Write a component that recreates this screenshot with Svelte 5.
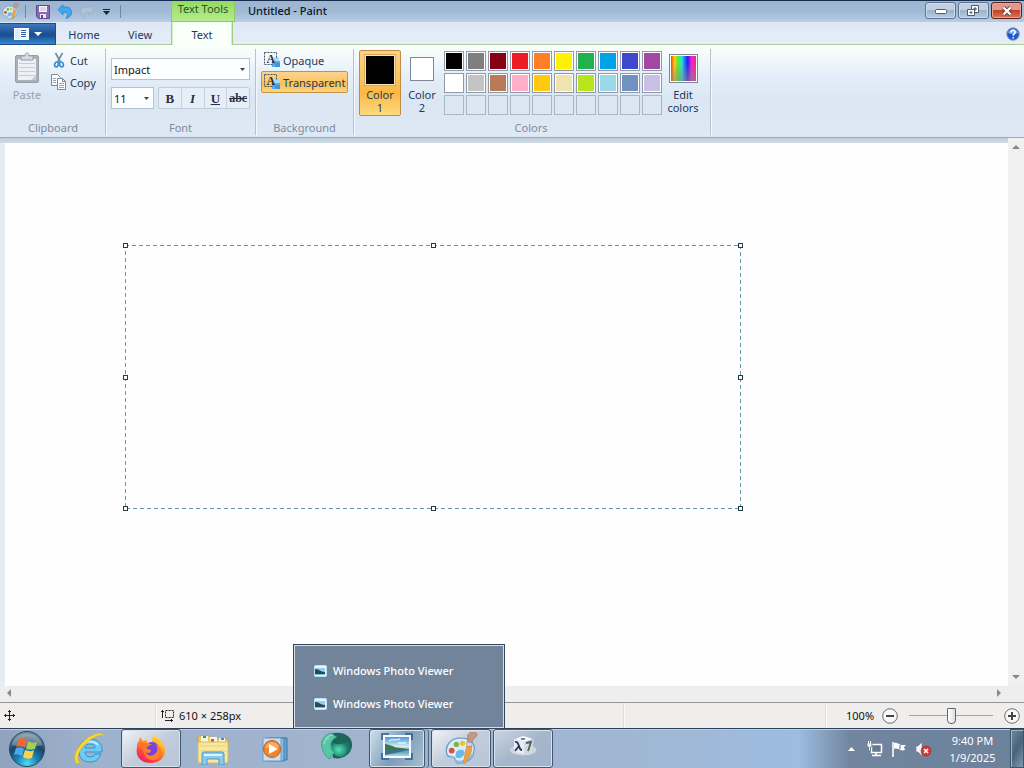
<script>
  let bg = $state('transparent');
  let active = $state(1);
  let color1 = $state('#000000');
  let color2 = $state('#ffffff');
  let zoom = $state(50);
  const palette = [
    '#000000', '#7f7f7f', '#880015', '#ed1c24', '#ff7f27', '#fff200', '#22b14c', '#00a2e8', '#3f48cc', '#a349a4',
    '#ffffff', '#c3c3c3', '#b97a57', '#ffaec9', '#ffc90e', '#efe4b0', '#b5e61d', '#99d9ea', '#7092be', '#c8bfe7'
  ];
  const empties = Array.from({ length: 10 });
  const handles = ['nw', 'n', 'ne', 'w', 'e', 'sw', 's', 'se'];
  function pick(c) {
    if (active === 1) color1 = c;
    else color2 = c;
  }
</script>

{#snippet arrow()}
  <svg class="arrow" width="5" height="3" viewBox="0 0 5 3" aria-hidden="true"><path d="M0 0h5L2.500 3z" fill="#3c4653" /></svg>
{/snippet}

{#snippet paintIcon(size)}
  <svg width={size} height={size} viewBox="0 0 32 32" aria-hidden="true">
    <path d="M2 22C-1 12 7 5 16 6c9 0 14 6 12 13-1 8-9 12-16 11-3-1-1-3-3-5s-6 0-7-3z" fill="#d8eefa" stroke="#6fa0c4" stroke-width="1.300" />
    <path d="M9 27c5 4 14 1 18-6" fill="none" stroke="#8bc0e0" stroke-width="2" />
    <circle cx="6.500" cy="18" r="2.800" fill="#d95240" />
    <circle cx="11" cy="12" r="2.600" fill="#7db548" />
    <circle cx="17" cy="11" r="2.600" fill="#e8c33b" />
    <path d="M11 19c3-3 8-2 8 1 0 4-6 7-9 4z" fill="#6eb9ea" />
    <path d="M22 3c2-4 10-4 9 0-1 3-4 3-5 7h-4z" fill="#c59a80" stroke="#9a7058" stroke-width=".6" />
    <path d="M21 10h5v4h-5z" fill="#cfd6dc" stroke="#8d969c" stroke-width=".6" />
    <path d="M21 14h5c0 6-2 10-7 17-2-3 0-5 0-8z" fill="#f0a04a" stroke="#cf8430" stroke-width=".6" />
  </svg>
{/snippet}

{#snippet bgIcon()}
  <svg width="17" height="16" viewBox="0 0 17 16" aria-hidden="true">
    <path d="M10 5h5v6h-5z" fill="#a8d8f6" /><path d="M8 9h8v6H8z" fill="#58aeea" /><path d="M11 11h5v4h-5z" fill="#3a97dd" />
    <path d="M.5.500h12v5M.5.500v12h8" fill="none" stroke="#3f566b" stroke-dasharray="2 1" />
    <text x="2.500" y="11" font-family="Liberation Serif, serif" font-weight="bold" font-size="12" fill="#22344a">A</text>
  </svg>
{/snippet}

{#snippet photoIcon()}
  <svg width="13" height="12" viewBox="0 0 13 12" aria-hidden="true">
    <rect x=".5" y=".5" width="12" height="11" rx="1" fill="#e5f4fb" stroke="#b9dff0" />
    <path d="M1 3h10v6H1z" fill="#9bcde6" /><path d="M1 4c5 0 5 3 10 3v3H1z" fill="#244a57" /><path d="M1 9h10v1H1z" fill="#75bfdc" />
  </svg>
{/snippet}

<div class="desktop">
  <header class="title">
    <div class="quick">
      <span class="app">{@render paintIcon(17)}</span>
      <i class="rule"></i>
      <button class="q" aria-label="Save">
        <svg width="14" height="14" viewBox="0 0 14 14"><path d="M.5.5h13v13h-11l-2-2z" fill="#8869b4" stroke="#63488f" /><path d="M3 1h8v6H3z" fill="#f6f3fa" /><path d="M4 3h6M4 5h6" stroke="#c9b9dc" /><path d="M4 9h6v4H4z" fill="#eee8f5" /><path d="M5 10h2v3H5z" fill="#64478f" /></svg>
      </button>
      <button class="q" aria-label="Undo">
        <svg width="16" height="15" viewBox="0 0 16 15"><path d="M1 5.500L6 .8v2.700c5-1.500 8.500.5 8.500 5 0 3-2 5-5.500 6 2.500-4 2-7-3-6v2.500z" fill="#3fa9ee" stroke="#2a83c6" stroke-width=".8" /></svg>
      </button>
      <button class="q" aria-label="Redo">
        <svg width="16" height="15" viewBox="0 0 16 15"><path d="M15 5.500L10 .8v2.700C5 2 1.500 4 1.500 8.500c0 3 2 5 5.500 6-2.500-4-2-7 3-6v2.500z" fill="#b1c1d5" stroke="#9bafc6" stroke-width=".8" /></svg>
      </button>
      <button class="q more" aria-label="Customize Quick Access Toolbar">
        <svg width="7" height="6" viewBox="0 0 7 6"><path d="M0 0h7v1H0zM0 2h7L3.500 6z" fill="#1b2536" /></svg>
      </button>
      <i class="rule"></i>
    </div>
    <div class="tooltab">Text Tools</div>
    <h1>Untitled - Paint</h1>
    <div class="winbtns">
      <button aria-label="Minimize"><svg width="12" height="6" viewBox="0 0 12 6"><rect x=".5" y="1.500" width="11" height="4" rx="1" fill="#fff" stroke="#4b5c72" /></svg></button>
      <button aria-label="Restore"><svg width="13" height="12" viewBox="0 0 13 12"><path d="M4.500.5h7v7h-7z" fill="#fff" stroke="#4b5c72" /><path d="M7 3h2v2H7z" fill="#9fb6d0" stroke="#4b5c72" /><path d="M.5 4.500h7v6h-7z" fill="#fff" stroke="#4b5c72" /><path d="M3 7h2v1H3z" fill="#9fb6d0" stroke="#4b5c72" /></svg></button>
      <button class="close" aria-label="Close"><svg width="12" height="10" viewBox="0 0 12 10"><path d="M2.500 1.500l7 7M9.500 1.500l-7 7" stroke="#5c3b3b" stroke-width="4" /><path d="M2.500 1.500l7 7M9.500 1.500l-7 7" stroke="#fff" stroke-width="2.400" /></svg></button>
    </div>
  </header>

  <nav class="tabs">
    <button class="file" aria-label="Paint menu">
      <svg width="15" height="12" viewBox="0 0 15 12"><path d="M0 0h15v12H0z" fill="#f6faff" /><path d="M1 1h5v10H1z" fill="#dde9f7" /><path d="M7 2.500h5M7 4.500h5M7 6.500h5M7 8.500h5" stroke="#2c5d9c" /></svg>
      <svg width="8" height="4" viewBox="0 0 8 4"><path d="M0 0h8L4 4z" fill="#fff" /></svg>
    </button>
    <button class="tab">Home</button>
    <button class="tab">View</button>
    <button class="tab on">Text</button>
    <button class="help" aria-label="Help">
      <svg width="14" height="14" viewBox="0 0 14 14"><circle cx="7" cy="7" r="6.300" fill="#1f56c8" stroke="#8fa9cf" /><path d="M2 6a5.200 5.200 0 0 1 10 0c-3 1.500-7 1.500-10 0z" fill="#78a4ec" /><path d="M5 5.500C5 2.700 9.200 2.700 9.200 5.200 9.200 7 7.200 6.800 7.200 8.800M7.200 10v1.500" fill="none" stroke="#fff" stroke-width="1.500" /></svg>
    </button>
  </nav>

  <section class="ribbon">
    <div class="group clip">
      <div class="body">
        <button class="paste" disabled>
          <svg width="26" height="32" viewBox="0 0 26 32"><rect x="1.500" y="3.500" width="23" height="27" rx="1.500" fill="#a9b0ba" stroke="#969ea8" /><path d="M4 7h18v21H4z" fill="#edf1f6" /><path d="M5 11.500h16M5 15.500h16M5 19.500h16M5 23.500h16" stroke="#c7ced7" /><path d="M17 28l5-5v5z" fill="#c4cbd4" /><path d="M7 4h4c0-4 4-4 4 0h4v4H7z" fill="#d7dce2" stroke="#969ea8" /></svg>
          Paste
        </button>
        <div class="stack">
          <button class="small">
            <svg width="16" height="16" viewBox="0 0 16 16"><path d="M4.500 1l5 9M11.500 1l-5 9" stroke="#6e8fb0" stroke-width="1.700" /><g fill="none" stroke="#3689c9" stroke-width="1.600"><ellipse cx="5.500" cy="12.500" rx="1.800" ry="2.500" transform="rotate(20 5.500 12.500)" /><ellipse cx="10.500" cy="12.500" rx="1.800" ry="2.500" transform="rotate(-20 10.500 12.500)" /></g></svg>
            Cut
          </button>
          <button class="small">
            <svg width="16" height="16" viewBox="0 0 16 16"><g fill="#fafcff" stroke="#7a8798"><path d="M.5.5h6l3 3v8h-9z" /><path d="M6.500 4.500h5l3 3v8h-8z" /></g><path d="M2 4.500h3M2 6.500h3M2 8.500h3M8 9.500h5M8 11.500h5M8 13.500h5" stroke="#8fa6c2" /><path d="M11.500 4.500v3h3" fill="none" stroke="#7a8798" /></svg>
            Copy
          </button>
        </div>
      </div>
      <h2>Clipboard</h2>
    </div>

    <div class="group font">
      <div class="body col">
        <label class="combo"><select aria-label="Font family"><option>Impact</option><option>Arial</option></select>{@render arrow()}</label>
        <div class="line">
          <label class="combo size"><select aria-label="Font size"><option>11</option><option>12</option></select>{@render arrow()}</label>
          <div class="styles">
            <button aria-label="Bold"><b>B</b></button>
            <button aria-label="Italic"><em>I</em></button>
            <button aria-label="Underline"><u>U</u></button>
            <button aria-label="Strikethrough"><s>abc</s></button>
          </div>
        </div>
      </div>
      <h2>Font</h2>
    </div>

    <div class="group back">
      <div class="body col">
        <button class="opt" class:sel={bg === 'opaque'} onclick={() => (bg = 'opaque')}>{@render bgIcon()}Opaque</button>
        <button class="opt" class:sel={bg === 'transparent'} onclick={() => (bg = 'transparent')}>{@render bgIcon()}Transparent</button>
      </div>
      <h2>Background</h2>
    </div>

    <div class="group colors">
      <div class="body">
        <button class="cur" class:sel={active === 1} onclick={() => (active = 1)}><span class="swatch big" style:background={color1}></span><span>Color<br />1</span></button>
        <button class="cur" class:sel={active === 2} onclick={() => (active = 2)}><span class="swatch" style:background={color2}></span><span>Color<br />2</span></button>
        <div class="palette">
          {#each palette as c}
            <button aria-label={c} style:background={c} onclick={() => pick(c)}></button>
          {/each}
          {#each empties as _}
            <button class="empty" disabled aria-label="Empty"></button>
          {/each}
        </div>
        <button class="edit"><span class="spectrum"></span><span>Edit<br />colors</span></button>
      </div>
      <h2>Colors</h2>
    </div>
  </section>

  <main>
    <div class="canvas">
      <div class="selection">
        <svg class="dash" width="100%" height="100%" aria-hidden="true"><rect x="0" y="0" width="100%" height="100%" /></svg>
        {#each handles as h}<i class="handle {h}"></i>{/each}
      </div>
    </div>
    <div class="vscroll">
      <button aria-label="Scroll up"><svg width="8" height="4" viewBox="0 0 8 4"><path d="M0 4h8L4 0z" /></svg></button>
      <button aria-label="Scroll down"><svg width="8" height="4" viewBox="0 0 8 4"><path d="M0 0h8L4 4z" /></svg></button>
    </div>
    <div class="hscroll">
      <button aria-label="Scroll left"><svg width="4" height="8" viewBox="0 0 4 8"><path d="M4 0v8L0 4z" /></svg></button>
      <button aria-label="Scroll right"><svg width="4" height="8" viewBox="0 0 4 8"><path d="M0 0v8l4-4z" /></svg></button>
    </div>
  </main>

  <div class="status">
    <div class="cell"><svg width="11" height="11" viewBox="0 0 11 11"><path d="M5.500 0v11M0 5.500h11" stroke="#222" /><path d="M4 1.500h3M4 9.500h3M1.500 4v3M9.500 4v3" stroke="#222" /></svg></div>
    <div class="cell"><svg width="14" height="12" viewBox="0 0 14 12"><path d="M1.500 0v8M0 1.500h3M4 10.500h8M10.500 9v3" stroke="#222" /><rect x="4.500" y=".5" width="8" height="7" fill="none" stroke="#222" stroke-dasharray="2 1" /></svg>610 × 258px</div>
    <div class="cell"></div>
    <div class="cell grow"></div>
    <div class="zoom">
      <span>100%</span>
      <button aria-label="Zoom out"><svg width="16" height="16" viewBox="0 0 16 16"><circle cx="8" cy="8" r="7.300" /><path d="M4 8h8" /></svg></button>
      <input type="range" aria-label="Zoom" min="0" max="100" bind:value={zoom} />
      <button aria-label="Zoom in"><svg width="16" height="16" viewBox="0 0 16 16"><circle cx="8" cy="8" r="7.300" /><path d="M4 8h8M8 4v8" /></svg></button>
    </div>
  </div>

  <footer>
    <button class="start" aria-label="Start">
      <svg width="38" height="38" viewBox="0 0 38 38">
        <defs><radialGradient id="orb" cx="50%" cy="92%" r="90%"><stop offset="0" stop-color="#4fe0f4" /><stop offset=".35" stop-color="#1c7db4" /><stop offset=".65" stop-color="#1b4466" /><stop offset="1" stop-color="#7896a8" /></radialGradient></defs>
        <circle cx="19" cy="19" r="17.500" fill="url(#orb)" stroke="#2b4762" />
        <path d="M4 15C7 0 31 0 34 15c-8 3-22 2-30 0z" fill="#fff" opacity=".28" />
        <path d="M11 9c3-2 6-1 8 1l-2 8c-3-2-6-2-9-1z" fill="#ee6836" />
        <path d="M20 11c3 2 6 2 9 1l-2 7c-3 1-6 1-9 0z" fill="#a1d053" />
        <path d="M8 18c3-1 6-1 8 1l-2 7c-2-1-5-2-8-1z" fill="#4ba8ea" />
        <path d="M17 20c3 1 6 2 9 0l-2 8c-3 1-6 1-9-1z" fill="#fbd34b" />
      </svg>
    </button>
    <button class="task" aria-label="Internet Explorer">
      <svg width="34" height="34" viewBox="0 0 34 34">
        <path d="M18 7C11 7 7 12 7 19s4 11 11 11c6 0 9-3 11-8h-6c-1 2-2 3-5 3-3 0-5-2-5-5h17C31 12 26 7 18 7zm-5 9c1-3 2-4 5-4s5 1 5 4z" fill="#6dcbf3" stroke="#3192cc" />
        <path d="M9 15c2-5 12-8 17-2" fill="none" stroke="#d5f3ff" stroke-width="1.500" />
        <path d="M4 31C-1 23 9 8 21 3c6-3 10-2 11 1-2-1-5-1-9 1C13 10 5 20 6 27c0 2 1 3 3 3-2 1-4 2-5 1z" fill="#f6d93c" stroke="#dbb020" stroke-width=".7" />
      </svg>
    </button>
    <button class="task open light" aria-label="Firefox">
      <svg width="32" height="32" viewBox="0 0 32 32">
        <defs><linearGradient id="ff" x1=".8" y1="0" x2=".2" y2="1"><stop offset="0" stop-color="#fff04a" /><stop offset=".4" stop-color="#ff9a24" /><stop offset=".7" stop-color="#ff4a36" /><stop offset="1" stop-color="#e01f76" /></linearGradient></defs>
        <path d="M4 8l1-4 3 4 4-1 0 3 5-1c0-4 1-6 3-8 1 4 6 5 9 11 4 10-3 18-13 18C6 30 0 24 2 14c0-3 1-5 2-6z" fill="url(#ff)" />
        <circle cx="17" cy="16" r="7" fill="#7542e5" />
        <path d="M9 11c3-1 6-1 8 1-4 0-6 2-5 4l4 1c0 3-3 4-6 2 2 5 10 5 12-1 1-3 0-5-2-7 9 3 8 14 0 16C11 29 6 19 9 11z" fill="#ff7d2c" />
        <path d="M3 12c2-3 5-3 7-2l4 3-5 3c-3 0-6-1-6-4z" fill="#ff7330" />
      </svg>
    </button>
    <button class="task" aria-label="Windows Explorer">
      <svg width="34" height="32" viewBox="0 0 34 32">
        <path d="M2 3h12l2 3h16v8H2z" fill="#e9cc67" stroke="#c5a249" /><path d="M5 3h7v6H5zM14 4h7v5h-7zM23 5h6v4h-6z" fill="#f3f6e0" /><path d="M7 3h3v2H7z" fill="#47924c" /><path d="M15 6h3v3h-3z" fill="#d75344" /><path d="M25 5h3v2h-3z" fill="#3e90c9" />
        <path d="M2 9h30v19q0 2-2 2H4q-2 0-2-2z" fill="#f8e79e" stroke="#d8b95c" /><path d="M4 13h26M4 18h26" stroke="#ead27d" />
        <path d="M6 32V21q0-2 2-2h18q2 0 2 2v11h-5v-6H11v6z" fill="#8ac9ed" stroke="#4b9acb" /><path d="M8 22h18" stroke="#dcf2fc" stroke-width="2" />
      </svg>
    </button>
    <button class="task" aria-label="Windows Media Player">
      <svg width="28" height="26" viewBox="0 0 28 26">
        <path d="M8 2h18v22H8z" fill="#6ba5d2" stroke="#3772a7" /><path d="M5 2h18v23H5z" fill="#8bbde1" stroke="#4380b0" /><path d="M2 2h18v23H2z" fill="#c8def0" stroke="#699fc9" />
        <circle cx="11" cy="13" r="8.500" fill="#f0842c" stroke="#c75d13" /><path d="M4 12c1-8 13-8 14 0z" fill="#fac284" opacity=".6" /><path d="M8 8l9 5-9 5z" fill="#fff" />
      </svg>
    </button>
    <button class="task sphere" aria-label="Green sphere">
      <svg width="34" height="30" viewBox="0 0 34 30">
        <defs><radialGradient id="gs" cx="40%" cy="55%"><stop offset="0" stop-color="#60dcba" /><stop offset=".65" stop-color="#2ba587" /><stop offset="1" stop-color="#1a7767" /></radialGradient></defs>
        <path d="M10 2c12-4 23 2 22 12-1 9-10 14-19 12z" fill="#1f6459" /><path d="M12 10c4 3 10 3 15-1 6 6 1 15-6 16-6 0-11-5-9-15z" fill="url(#gs)" />
        <path d="M11 1C4 3 0 9 2 16c1 5 4 9 8 11 1-3 2-5 5-6-4-3-5-7-4-10 1-3 4-5 6-6z" fill="#54c7a4" stroke="#2b8871" stroke-width=".6" /><path d="M5 7c3-3 6-4 8-4M4 12c0-3 2-5 5-6" stroke="#a2e5d3" fill="none" />
      </svg>
    </button>
    <div class="slot">
      <button class="task open stacked" aria-label="Windows Photo Viewer">
        <svg width="32" height="28" viewBox="0 0 32 28">
          <defs><linearGradient id="pv" x2="0" y2="1"><stop offset="0" stop-color="#3b93d8" /><stop offset=".5" stop-color="#d7edf4" /><stop offset=".75" stop-color="#5fa0bc" /><stop offset="1" stop-color="#c9e4ea" /></linearGradient></defs>
          <path d="M1 7V1h7M24 1h7v6M1 20v6h7M24 26h7v-6" fill="none" stroke="#2f5f8e" stroke-width="1.600" />
          <rect x="3" y="3" width="26" height="21" fill="url(#pv)" stroke="#f4faff" stroke-width="2" />
          <path d="M4 11c5 0 9 4 16 4l8 1v1l-24 1z" fill="#3f7745" /><path d="M4 17h24l-14 3-10 2z" fill="#3a718c" /><path d="M8 8c4-3 7 0 11-2M17 10h8" stroke="#fff" stroke-width="1.500" opacity=".7" fill="none" />
        </svg>
      </button>
      <ul class="jump">
        <li><button>{@render photoIcon()}Windows Photo Viewer</button></li>
        <li><button>{@render photoIcon()}Windows Photo Viewer</button></li>
      </ul>
    </div>
    <button class="task open light" aria-label="Paint">{@render paintIcon(33)}</button>
    <button class="task open cube" aria-label="Character cube">
      <svg width="32" height="24" viewBox="0 0 32 24">
        <ellipse cx="16" cy="15" rx="14" ry="6" fill="#ccd5e1" stroke="#a7b5c7" /><path d="M8 4l8-3 10 3-9 3z" fill="#fbfcfe" /><path d="M7 4l10 3v12L7 17z" fill="#e9edf3" /><path d="M17 7l10-2-3 13-7 2z" fill="#d3dae5" /><ellipse cx="16" cy="4" rx="2.500" ry="1" fill="#68758a" />
        <path d="M8 7c3-1 3 2 4 4 1 3 1 4 3 4M12 11l-4 5" fill="none" stroke="#27345a" stroke-width="1.800" /><path d="M19 8l5-1-3 9" fill="none" stroke="#456452" stroke-width="1.800" />
      </svg>
    </button>
    <div class="tray">
      <button aria-label="Show hidden icons"><svg width="7" height="4" viewBox="0 0 7 4"><path d="M0 4h7L3.500 0z" fill="#fff" /></svg></button>
      <button aria-label="Network"><svg width="16" height="16" viewBox="0 0 16 16"><path d="M4.500 3.500h10v8h-10z" fill="#65798f" stroke="#fff" stroke-width="1.500" /><path d="M9 12v2M5 14.500h9" stroke="#fff" stroke-width="1.500" /><path d="M0 2h5v4H3.500v4h-2V6H0z" fill="#e9eff5" stroke="#53677f" stroke-width=".7" /><path d="M1.500 0v3M3.500 0v3" stroke="#fff" /></svg></button>
      <button aria-label="Action Center"><svg width="16" height="16" viewBox="0 0 16 16"><path d="M2 1v15" stroke="#fff" stroke-width="1.600" /><path d="M3 2c3-1 4 1 6 1v1h6l-2 2 1 3c-3 1-5 0-6-1-2 0-3-1-5 0z" fill="#fff" /><path d="M9 4v4" stroke="#566a82" /></svg></button>
      <button aria-label="Volume muted"><svg width="17" height="16" viewBox="0 0 17 16"><path d="M1 5h2l4-4v14l-4-4H1z" fill="#f3f7fb" stroke="#63758b" stroke-width=".6" /><circle cx="11" cy="10" r="5" fill="#d8372c" stroke="#942c28" stroke-width=".6" /><path d="M9 8l4 4M13 8l-4 4" stroke="#fff" stroke-width="1.600" /></svg></button>
      <time datetime="2025-01-09T21:40">9:40 PM<br />1/9/2025</time>
      <button class="peek" aria-label="Show desktop"></button>
    </div>
  </footer>
</div>

<style>
  :global(body) { margin: 0; }
  .desktop { height: 100vh; display: flex; flex-direction: column; overflow: hidden; font: 11px/13px "Noto Sans", "Open Sans", sans-serif; color: #1e395b; background: #f0f0f0; }
  .desktop * { box-sizing: border-box; }
  button { font: inherit; color: inherit; border: 0; padding: 0; margin: 0; background: none; display: flex; align-items: center; justify-content: center; }
  svg { display: block; flex: none; }
  h1, h2 { margin: 0; font: inherit; }

  .title { display: flex; align-items: stretch; flex: none; height: 22px; border-top: 1px solid #162d4e; background: linear-gradient(#9db5d0, #a0b9d5 50%, #b9cde4); }
  .quick { display: flex; align-items: center; width: 171px; padding-left: 2px; }
  .app { width: 23px; }
  .rule { width: 1px; height: 13px; background: #6f87a5; }
  .q { width: 22px; }
  .app + .rule { margin-right: 6px; }
  .more { width: 16px; margin-right: 6px; }
  .tooltab { width: 64px; border: 1px solid #8dcc5d; border-width: 0 1px 1px; background: linear-gradient(#94da62, #b5ec8d); color: #2c5426; text-align: center; line-height: 16px; }
  h1 { padding-left: 13px; line-height: 20px; color: #0a1626; font-weight: 500; }
  .winbtns { margin-left: auto; display: flex; gap: 2px; padding: 1px 2px 3px; }
  .winbtns button { width: 31px; border: 1px solid #5c738f; border-radius: 3px; box-shadow: inset 0 0 0 1px #cbdcec; background: linear-gradient(#c0d0e2 45%, #9bb2cc 50%, #b8cde2); }
  .winbtns .close { border-color: #5b1f1e; box-shadow: inset 0 0 0 1px #e8a698; background: linear-gradient(#e2988a 45%, #c44227 50%, #d9775a); }

  .tabs { display: flex; align-items: stretch; flex: none; height: 23px; background: linear-gradient(#dee8f5, #e5edf8); box-shadow: inset 0 -1px #a9cf96; }
  .file { width: 56px; gap: 5px; margin: 1px 0 0; background: linear-gradient(#3d79bd, #1c4f91 50%, #1a5298 60%, #3789ca); border: 1px solid #1f4c88; border-left: 0; }
  .tab { width: 56px; padding-top: 2px; }
  .tab.on { width: 62px; margin-left: 3px; background: #fafffa; border: 1px solid #9ad479; border-width: 0 1px; box-shadow: inset 1px 0 #d1f3bb, inset -1px 0 #d1f3bb; }
  .help { margin-left: auto; padding-right: 4px; }

  .ribbon { display: flex; flex: none; height: 93px; padding: 4px 3px 2px; border-bottom: 1px solid #9baabb; background: linear-gradient(#fafffb, #eff6fa 20%, #e4eff9 32%, #dae6f3 60%, #dfe9f5); }
  .group { display: flex; flex-direction: column; border-right: 1px solid #b5c2d0; box-shadow: 1px 0 #f5f9fd; }
  .group h2 { text-align: center; color: #7c8b9c; line-height: 15px; }
  .clip h2, .colors h2 { padding-right: 2px; }
  .body { flex: 1; display: flex; align-items: flex-start; }
  .col { flex-direction: column; }
  .clip { width: 103px; }
  .paste { flex-direction: column; gap: 4px; width: 48px; padding-top: 3px; color: #9a9fa8; }
  .stack { display: flex; flex-direction: column; }
  .small { height: 22px; gap: 3px; justify-content: flex-start; }
  .font { width: 150px; }
  .font .body { padding: 9px 5px 0; gap: 7px; align-items: stretch; }
  .combo { display: grid; align-items: center; height: 22px; border: 1px solid #b4c2d1; background: #fdfeff; color: #101820; }
  .combo select { grid-area: 1 / 1; width: 100%; height: 100%; appearance: none; border: 0; background: none; font: inherit; color: inherit; padding: 0 2px; }
  .combo :global(.arrow) { grid-area: 1 / 1; justify-self: end; margin-right: 4px; pointer-events: none; }
  .line { display: flex; gap: 4px; }
  .size { width: 43px; }
  .styles { flex: 1; display: flex; border: 1px solid #c0ccd9; border-radius: 2px; background: #e6eff8; }
  .styles button { flex: 1 1 0; min-width: 0; font: bold 13px/13px "Liberation Serif", serif; color: #2b2f41; border-right: 1px solid #c7d2de; }
  .styles button:last-child { border: 0; font-size: 12px; }
  .back { width: 98px; }
  .back .body { padding: 0 5px; align-items: stretch; }
  .opt { height: 22px; gap: 2px; padding: 0 2px; border: 1px solid transparent; border-radius: 2px; justify-content: flex-start; white-space: nowrap; }
  .sel { background: linear-gradient(#fcd087, #fbc566 40%, #fbb744 65%, #fddb7e); border-color: #c99045; }
  .opt.sel { background: linear-gradient(#fcd48c, #fbc565 50%, #fbbd50 60%, #fdd783); }
  .colors { width: 357px; }
  .colors .body { padding: 1px 5px 0; }
  .cur { flex-direction: column; justify-content: space-between; width: 42px; height: 66px; padding: 3px 0 1px; border: 1px solid transparent; border-radius: 2px; }
  .cur.sel { border-color: #c08b45; }
  .swatch { width: 24px; height: 24px; margin: 3px; border: 1px solid #7d8898; outline: 1px solid #fff; outline-offset: -2px; }
  .swatch.big { width: 32px; height: 32px; margin: 0; border-color: #d9a552; box-shadow: inset 0 0 0 1px #fbe6b5; outline: 0; }
  .palette { display: grid; grid-template-columns: repeat(10, 20px); gap: 2px; padding-top: 1px; margin-left: 1px; }
  .palette button { height: 20px; border: 1px solid #9299a8; box-shadow: inset 0 0 0 1px #fff; }
  .palette .empty { border-color: #acb7c5; box-shadow: none; }
  .edit { flex-direction: column; gap: 5px; width: 42px; padding-top: 4px; }
  .spectrum { width: 29px; height: 29px; border: 1px solid #858891; box-shadow: inset 0 0 0 1px #fff; background: linear-gradient(transparent 25%, #8888 90%) content-box, linear-gradient(90deg, #ff3a20, #ffd000 14%, #52ee35 27%, #25e4ce 44%, #1c69ff 56%, #3b10ef 67%, #ef22df 82%, #ff295c) content-box; padding: 1px; }

  main { flex: 1; min-height: 0; display: grid; grid-template-columns: minmax(0, 1fr) 16px; grid-template-rows: minmax(0, 1fr) 16px; background: linear-gradient(#bfcddb, #cfdae6 5px, #e5edf6 5px); }
  .canvas { position: relative; margin: 5px 0 0 5px; background: #fefefe; }
  .selection { position: absolute; left: 120px; top: 102px; width: 616px; height: 264px; }
  .dash { position: absolute; inset: 0; overflow: hidden; }
  .dash rect { fill: none; stroke: #6498a9; stroke-width: 2; stroke-dasharray: 4 3; }
  .handle { position: absolute; width: 5px; height: 5px; margin: -2px; background: #fff; border: 1px solid #263a43; left: 308px; top: 132px; }
  .nw, .w, .sw { left: 0; }
  .ne, .e, .se { left: 615px; }
  .nw, .n, .ne { top: 0; }
  .sw, .s, .se { top: 263px; }
  .vscroll, .hscroll { display: flex; justify-content: space-between; background: #f0f0f0; }
  .vscroll { flex-direction: column; }
  .hscroll { grid-column: 1 / -1; padding-right: 16px; background: #eee; }
  .vscroll button { height: 18px; }
  .hscroll button { width: 18px; padding-bottom: 2px; }
  .vscroll path, .hscroll path { fill: #86898c; }

  .status { display: flex; align-items: stretch; flex: none; height: 26px; border-top: 1px solid #8f989f; background: #f0eeed; color: #111; }
  .cell { display: flex; align-items: center; gap: 4px; width: 156px; padding-left: 4px; border-right: 1px solid #dedcdb; box-shadow: 1px 0 #fafafa; }
  .cell + .cell { width: 234px; padding-left: 5px; }
  .cell.grow { flex: 1; }
  .zoom { display: flex; align-items: center; width: 198px; padding: 0 4px 0 20px; gap: 8px; }
  .zoom circle { fill: #f7f7f7; stroke: #6e6e6e; }
  .zoom path { stroke: #444; stroke-width: 2; }
  input { flex: 1; min-width: 0; margin: 0 3px; height: 18px; appearance: none; background: linear-gradient(#a5a5a5, #a5a5a5) center / 100% 1px no-repeat; }
  input::-webkit-slider-thumb { appearance: none; width: 9px; height: 16px; border: 1px solid #666; border-radius: 1px 1px 4px 4px; background: linear-gradient(90deg, #fff, #ddd); }

  footer { position: relative; display: flex; align-items: stretch; flex: none; height: 40px; gap: 2px; border-top: 1px solid #2c4158; background: linear-gradient(90deg, #8fa3bf, #9fb2cd 100px, #a1b6d2 60%, #9dbce0 78%, #71859f 83%, #6c819b); box-shadow: inset 0 1px #bfcee0; }
  .start { width: 57px; padding-right: 3px; }
  .task { width: 60px; border: 1px solid transparent; border-radius: 3px; }
  .sphere, .cube { padding-bottom: 4px; }
  .open { border-color: #42566f; box-shadow: inset 0 0 0 1px #d8e2ed; background: linear-gradient(145deg, #cad5e3, #a6b6cb 50%, #9eb3ce); }
  .open.light { background: linear-gradient(145deg, #f0f3f8, #c2ccdb 50%, #b6c5d8); }
  .slot { position: relative; display: flex; }
  .stacked { width: 56px; margin-right: 4px; padding-bottom: 4px; background: linear-gradient(120deg, #d0e0ed, #7c9cb8 50%, #a7bfd2); box-shadow: inset 0 0 0 1px #d8e2ed, 3px 0 #9eb1c8, 4px 0 #4f6680; }
  .jump { position: absolute; bottom: 100%; left: 50%; width: 212px; margin: 0 0 0 -106px; padding: 9px 9px 8px; list-style: none; background: #72849a; border: 1px solid #35455a; box-shadow: inset 0 0 0 1px #d6dee7; color: #fff; }
  .jump button { width: 100%; height: 33px; justify-content: flex-start; gap: 6px; padding-left: 11px; font-weight: 500; }
  .tray { margin-left: auto; display: flex; color: #fff; }
  .tray button { width: 24px; }
  time { width: 75px; text-align: center; line-height: 17px; padding-top: 3px; }
  .tray .peek { width: 14px; border: 1px solid #3e546c; box-shadow: inset 1px 1px #a3b5c7; background: linear-gradient(120deg, #71899f, #49637c 50%, #8199ab); }
</style>
